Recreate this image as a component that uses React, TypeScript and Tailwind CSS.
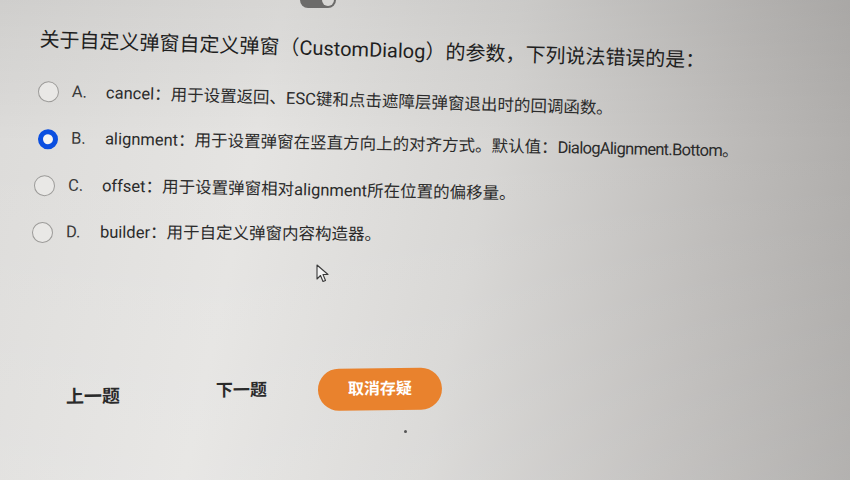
import React from "react";

const font = { fontFamily: 'Roboto, "Noto Sans CJK SC", sans-serif' };

function Radio({ checked }: { checked?: boolean }) {
  if (checked) {
    return (
      <span className="w-[20px] h-[20px] rounded-full border-[5px] border-[#0b4fe0] bg-[#f4f4f4] shrink-0" />
    );
  }
  return <span className="w-[21px] h-[21px] rounded-full border-[1.5px] border-[#9c9b99] bg-[#e9e8e6] shrink-0" />;
}

function Option({
  letter,
  children,
  checked,
  ml,
  rot,
}: {
  letter: string;
  children: React.ReactNode;
  checked?: boolean;
  ml: string;
  rot: string;
}) {
  return (
    <div className={`flex items-center h-[47px] ${ml} ${rot} origin-left`}>
      <Radio checked={checked} />
      <span className="ml-[13px] w-[34px] text-[16.5px] text-[#3a3a3a]">{letter}</span>
      <span className="text-[16.5px] text-[#2b2b2b] whitespace-nowrap">{children}</span>
    </div>
  );
}

export default function App() {
  return (
    <div
      className="relative w-[850px] h-[480px] overflow-hidden bg-[linear-gradient(102deg,#dcdbd9_0%,#e5e4e2_30%,#d7d6d4_55%,#bdbbb9_80%,#a9a7a5_100%)]"
      style={font}
    >
      <div className="absolute inset-0 bg-[linear-gradient(180deg,rgba(0,0,0,0.06)_0%,rgba(0,0,0,0)_30%,rgba(255,255,255,0.12)_100%)]" />
      <div className="relative flex flex-col">
        <div className="flex justify-start pl-[300px] h-0">
          <div className="w-[36px] h-[16px] -mt-[8px] rounded-full bg-[#6c6b6a] flex items-center justify-end pr-[2px]">
            <span className="w-[12px] h-[12px] rounded-full bg-[#d8d7d5]" />
          </div>
        </div>
        <div className="pl-[40px] pt-[24px] rotate-[1.8deg] origin-left">
          <div className="text-[20px] leading-[28px] text-[#1f1f1f] whitespace-nowrap">
            关于自定义弹窗自定义弹窗（CustomDialog）的参数，下列说法错误的是：
          </div>
        </div>
        <div className="flex flex-col mt-[16px]">
          <Option ml="ml-[38px]" rot="rotate-[1.8deg]" letter="A.">
            cancel：用于设置返回、ESC键和点击遮障层弹窗退出时的回调函数。
          </Option>
          <Option ml="ml-[38px]" rot="rotate-[1.1deg]" letter="B." checked>
            alignment：用于设置弹窗在竖直方向上的对齐方式。默认值：
            <span className="tracking-[-0.7px]">DialogAlignment.Bottom</span>。
          </Option>
          <Option ml="ml-[34px]" rot="rotate-[1.1deg]" letter="C.">
            offset：用于设置弹窗相对alignment所在位置的偏移量。
          </Option>
          <Option ml="ml-[32px]" rot="rotate-[0.5deg]" letter="D.">
            builder：用于自定义弹窗内容构造器。
          </Option>
        </div>
        <div className="flex items-center mt-[116px] ml-[66px] -rotate-[0.7deg] origin-left">
          <span className="text-[18px] font-bold text-[#2a2a2a] w-[150px] translate-y-[3px]">上一题</span>
          <span className="text-[17px] font-bold text-[#2a2a2a] w-[102px]">下一题</span>
          <button className="w-[124px] h-[42px] rounded-full bg-[#e9822d] text-white text-[16px] font-bold">
            取消存疑
          </button>
        </div>
      </div>
      <svg className="absolute left-[316px] top-[264px]" width="14" height="20" viewBox="0 0 14 20">
        <path d="M1 1 L1 15 L4.5 11.5 L7 17.5 L9.5 16.5 L7 10.5 L12 10.5 Z" fill="#f2f2f2" stroke="#3a3a3a" strokeWidth="1.1" strokeLinejoin="round" />
      </svg>
      <span className="absolute left-[404px] top-[430px] w-[3px] h-[3px] rounded-full bg-[#555]" />
    </div>
  );
}
